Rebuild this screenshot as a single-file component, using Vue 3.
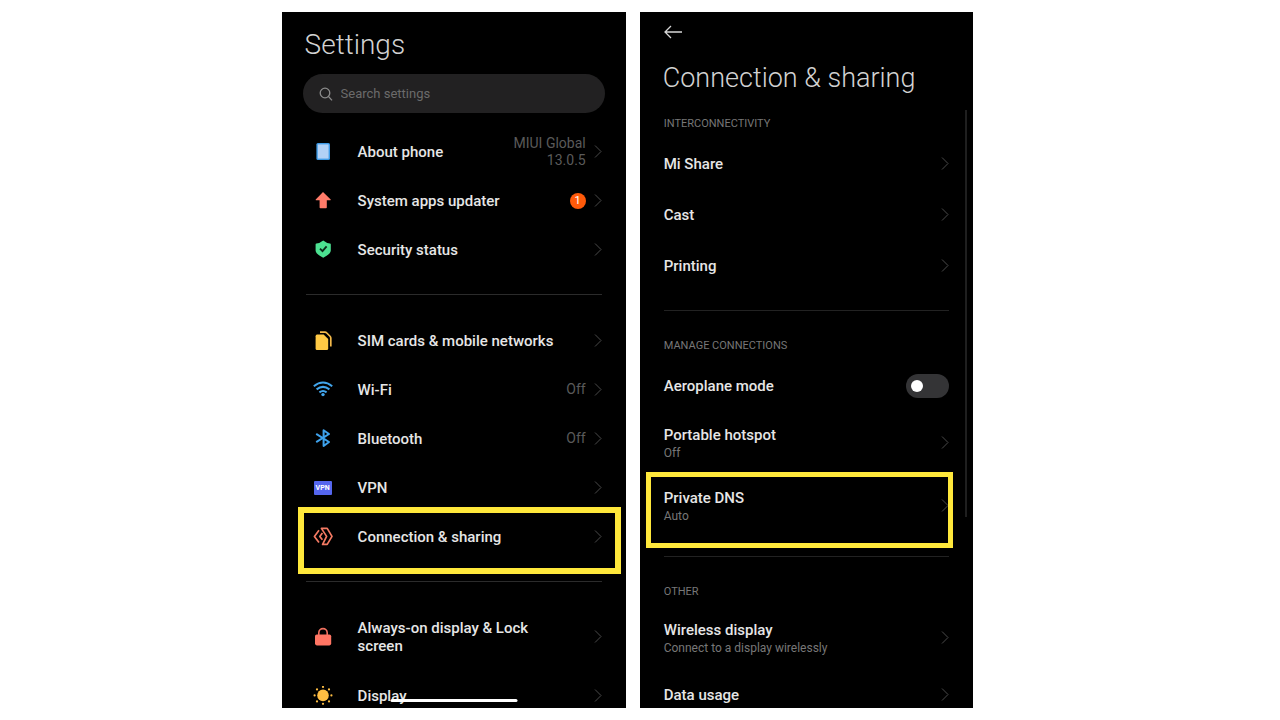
<template>
    <main class="page">
        <section class="phone" aria-label="Settings">
            <h1 class="title">Settings</h1>
            <label class="search">
                <svg class="search__icon" viewBox="0 0 14 14" aria-hidden="true">
                    <circle cx="6" cy="6" r="4.8" />
                    <path d="M9.4 9.4 13 13.4" />
                </svg>
                <input
                    v-model="query"
                    class="search__input"
                    type="text"
                    placeholder="Search settings"
                    aria-label="Search settings"
                />
            </label>

            <div v-for="(group, index) in groups" :key="index" class="group">
                <button
                    v-for="item in group"
                    :key="item.label"
                    type="button"
                    class="row"
                    :class="{ 'row--tall': item.tall }"
                >
                    <span class="row__icon">
                        <svg v-if="item.icon === 'phone'" viewBox="0 0 20 20">
                            <rect x="3.4" y="1" width="13.6" height="17" rx="1.5" fill="#3f9be6" />
                            <rect x="4.8" y="2.4" width="10.8" height="14.2" fill="#b3d1f5" />
                        </svg>
                        <svg v-else-if="item.icon === 'update'" viewBox="0 0 20 20">
                            <path
                                d="M10 1 17.7 8.4Q18 9.2 17.3 9.2H13.8V16.4Q13.8 17.2 13 17.2H7.4Q6.6 17.2 6.6 16.4V9.2H3Q2.4 9.2 2.7 8.4Z"
                                fill="#ff7b69"
                            />
                        </svg>
                        <svg v-else-if="item.icon === 'shield'" viewBox="0 0 20 20">
                            <path
                                d="M10.2.4Q13.5 3 17 3.6Q17.8 3.8 17.8 4.6V10.6Q17.8 14 10.2 17.8Q2.6 14 2.6 10.6V4.6Q2.6 3.8 3.4 3.6Q7 3 10.2.4Z"
                                fill="#4ce191"
                            />
                            <path d="M7 8.6 9.5 11.2 13.6 6.4" fill="none" stroke="#0b2a1a" stroke-width="1.8" />
                        </svg>
                        <svg v-else-if="item.icon === 'sim'" viewBox="0 0 20 20">
                            <path
                                d="M4 3.6H10.6L15.2 8V17.4Q15.2 19 13.6 19H4Q2.6 19 2.6 17.4V5.2Q2.6 3.6 4 3.6Z"
                                fill="#ffc944"
                            />
                            <path
                                d="M7 1.2H12Q13 1.2 13.8 2L16.8 5Q17.8 6 17.8 7V15.6"
                                fill="none"
                                stroke="#f3b94b"
                                stroke-width="1.7"
                            />
                        </svg>
                        <svg v-else-if="item.icon === 'wifi'" viewBox="0 0 20 20">
                            <g fill="none" stroke="#42a5ec" stroke-width="2">
                                <path d="M.8 6.2Q10-1.2 19.2 6.2" />
                                <path d="M3.6 9.4Q10 4.4 16.4 9.4" />
                                <path d="M6.4 12.4Q10 9.6 13.6 12.4" />
                            </g>
                            <circle cx="10" cy="14.6" r="1.7" fill="#42a5ec" />
                        </svg>
                        <svg v-else-if="item.icon === 'bluetooth'" viewBox="0 0 20 20">
                            <path
                                d="M3.2 4.8 16 13 10.6 17V1.2L16 5 3.2 13.2"
                                fill="none"
                                stroke="#3ea2ec"
                                stroke-width="2"
                                stroke-linejoin="round"
                            />
                        </svg>
                        <span v-else-if="item.icon === 'vpn'" class="vpn" aria-hidden="true">VPN</span>
                        <svg v-else-if="item.icon === 'share'" viewBox="0 0 20 20">
                            <g fill="none" stroke="#f47a63" stroke-width="1.7" stroke-linejoin="round">
                                <path d="M8.4 1.4H14.2L19 9.4 14.2 17.4H9.6L13.6 9.4Z" />
                                <path d="M6 3.2 1.4 9.4 6 15.6" />
                                <path d="M9.4 6 6.8 9.4 9.4 12.8" />
                            </g>
                        </svg>
                        <svg v-else-if="item.icon === 'lock'" viewBox="0 0 20 20">
                            <rect x="2" y="7.4" width="16.2" height="11" rx="1.8" fill="#ff7563" />
                            <path
                                d="M5.8 8V5.8A4.2 4.2 0 0 1 14.2 5.8V8"
                                fill="none"
                                stroke="#f0705f"
                                stroke-width="1.6"
                            />
                        </svg>
                        <svg v-else viewBox="0 0 20 20" fill="#ffbe43">
                            <circle cx="10" cy="9.4" r="5.8" />
                            <circle cx="10" cy="1" r="1.1" />
                            <circle cx="10" cy="17.8" r="1.1" />
                            <circle cx="1.6" cy="9.4" r="1.1" />
                            <circle cx="18.4" cy="9.4" r="1.1" />
                            <circle cx="4" cy="3.4" r="1.1" />
                            <circle cx="16" cy="3.4" r="1.1" />
                            <circle cx="4" cy="15.4" r="1.1" />
                            <circle cx="16" cy="15.4" r="1.1" />
                        </svg>
                    </span>
                    <span class="row__label">{{ item.label }}</span>
                    <span v-if="item.value" class="row__value">{{ item.value }}</span>
                    <span v-if="item.badge" class="badge">{{ item.badge }}</span>
                    <svg class="chevron" viewBox="0 0 8 14" aria-hidden="true">
                        <path d="M1 .5 7 6.5 1 12.5" />
                    </svg>
                    <span v-if="item.marked" class="marker"></span>
                </button>
            </div>
            <span class="home-bar"></span>
        </section>

        <section class="phone phone--detail" aria-label="Connection & sharing">
            <button type="button" class="back" aria-label="Back">
                <svg viewBox="0 0 18 14" aria-hidden="true">
                    <path d="M18 7H1M7 1 1 7 7 13" />
                </svg>
            </button>
            <h1 class="title title--detail">Connection &amp; sharing</h1>

            <div v-for="section in sections" :key="section.heading" class="group group--detail">
                <h2 class="heading">{{ section.heading }}</h2>
                <template v-for="item in section.items" :key="item.label">
                    <label v-if="item.toggle" class="row row--detail">
                        <span class="row__label">{{ item.label }}</span>
                        <input v-model="aeroplane" class="switch" type="checkbox" />
                    </label>
                    <button
                        v-else
                        type="button"
                        class="row row--detail"
                        :class="{ 'row--double': item.note }"
                    >
                        <span class="row__label">
                            {{ item.label }}
                            <small v-if="item.note" class="row__note">{{ item.note }}</small>
                        </span>
                        <svg class="chevron" viewBox="0 0 8 14" aria-hidden="true">
                            <path d="M1 .5 7 6.5 1 12.5" />
                        </svg>
                        <span v-if="item.marked" class="marker marker--detail"></span>
                    </button>
                </template>
            </div>
            <span class="scrollbar"></span>
        </section>
    </main>
</template>

<script setup>
import { ref } from "vue";

const query = ref("");
const aeroplane = ref(false);

const groups = [
    [
        { icon: "phone", label: "About phone", value: "MIUI Global 13.0.5" },
        { icon: "update", label: "System apps updater", badge: 1 },
        { icon: "shield", label: "Security status" },
    ],
    [
        { icon: "sim", label: "SIM cards & mobile networks" },
        { icon: "wifi", label: "Wi-Fi", value: "Off" },
        { icon: "bluetooth", label: "Bluetooth", value: "Off" },
        { icon: "vpn", label: "VPN" },
        { icon: "share", label: "Connection & sharing", marked: true },
    ],
    [
        { icon: "lock", label: "Always-on display & Lock screen", tall: true },
        { icon: "sun", label: "Display" },
    ],
];

const sections = [
    {
        heading: "INTERCONNECTIVITY",
        items: [{ label: "Mi Share" }, { label: "Cast" }, { label: "Printing" }],
    },
    {
        heading: "MANAGE CONNECTIONS",
        items: [
            { label: "Aeroplane mode", toggle: true },
            { label: "Portable hotspot", note: "Off" },
            { label: "Private DNS", note: "Auto", marked: true },
        ],
    },
    {
        heading: "OTHER",
        items: [
            { label: "Wireless display", note: "Connect to a display wirelessly" },
            { label: "Data usage" },
        ],
    },
];
</script>

<style>
body {
    margin: 0;
    background: #fff;
}
</style>

<style scoped>
.page {
    box-sizing: border-box;
    height: 100vh;
    padding: 12px 24% 12px 22%;
    display: grid;
    grid-template-columns: 344fr 333fr;
    gap: 14px;
    font-family: Roboto, "Liberation Sans", sans-serif;
    overflow: hidden;
}

.phone {
    position: relative;
    box-sizing: border-box;
    min-width: 0;
    min-height: 0;
    padding: 16px 24px 0;
    background: #000;
    color: #e6e6e6;
    overflow: hidden;
}

.phone--detail {
    padding-top: 12px;
}

.title {
    margin: 0 0 0 -1px;
    font-size: 28px;
    font-weight: 300;
    line-height: 34px;
    color: #d2d2d2;
}

.title--detail {
    margin-top: 21px;
    margin-bottom: 15px;
    font-size: 27px;
}

.search {
    display: flex;
    align-items: center;
    gap: 8px;
    height: 39px;
    margin: 12px -3px 14px;
    padding: 0 16px;
    border-radius: 20px;
    background: #222122;
}

.search__icon {
    flex: none;
    width: 14px;
    height: 14px;
    fill: none;
    stroke: #8c8c8c;
    stroke-width: 1.3;
}

.search__input {
    flex: 1;
    min-width: 0;
    padding: 0;
    border: 0;
    outline: 0;
    background: none;
    font: 400 13px/18px Roboto, "Liberation Sans", sans-serif;
    color: #e6e6e6;
}

.search__input::placeholder {
    color: #6b6b6b;
    opacity: 1;
}

.group + .group {
    margin-top: 20px;
    padding-top: 21px;
    border-top: 1px solid #2b2b2b;
}

.group--detail + .group--detail {
    margin-top: 19px;
    border-top-color: #222;
}

.heading {
    margin: 0;
    font-size: 11px;
    font-weight: 400;
    line-height: 28px;
    color: #777;
}

.row {
    position: relative;
    display: flex;
    align-items: center;
    width: 100%;
    min-height: 49px;
    padding: 0;
    border: 0;
    background: none;
    font-family: inherit;
    font-size: 15px;
    font-weight: 500;
    line-height: 18px;
    text-align: left;
    color: inherit;
    cursor: pointer;
}

.row--tall {
    min-height: 68px;
}

.row--tall .row__label {
    padding-right: 24px;
}

.row--detail {
    min-height: 51px;
}

.row--double {
    min-height: 63px;
}

.row--double .row__label {
    padding-top: 3px;
}

.row__icon {
    flex: none;
    display: flex;
    justify-content: center;
    width: 34px;
    margin-right: 18px;
}

.row__icon svg {
    width: 20px;
    height: 20px;
}

.row__label {
    flex: 1;
}

.row__note {
    display: block;
    font-size: 12px;
    font-weight: 400;
    color: #777;
}

.row__value {
    width: 80px;
    font-size: 14px;
    font-weight: 400;
    line-height: 17px;
    text-align: right;
    color: #5a5a5a;
}

.badge {
    width: 16px;
    height: 16px;
    border-radius: 50%;
    background: #ff5a0a;
    font-size: 11px;
    font-weight: 400;
    line-height: 16px;
    text-align: center;
    color: #fff;
}

.chevron {
    flex: none;
    width: 8px;
    height: 14px;
    margin-left: 8px;
    fill: none;
    stroke: #4a4a4a;
    stroke-width: 1;
}

.vpn {
    width: 18px;
    border-radius: 1px;
    background: #5566ee;
    font-size: 7px;
    font-weight: 700;
    line-height: 14px;
    text-align: center;
    color: #fff;
}

.marker {
    position: absolute;
    inset: -5px -19px -13px -8px;
    border: 6px solid #ffe83b;
    pointer-events: none;
}

.marker--detail {
    inset: -2px -4px -11px -18px;
    border-width: 5px;
}

.back {
    display: flex;
    align-items: center;
    height: 16px;
    padding: 0;
    border: 0;
    background: none;
    cursor: pointer;
}

.back svg {
    width: 18px;
    height: 14px;
    fill: none;
    stroke: #d6d6d6;
    stroke-width: 1.3;
}

.switch {
    appearance: none;
    box-sizing: border-box;
    display: flex;
    align-items: center;
    width: 43px;
    height: 24px;
    margin: 0;
    padding: 0 5px;
    border-radius: 12px;
    background: #343436;
    cursor: pointer;
}

.switch::before {
    content: "";
    width: 12px;
    height: 12px;
    border-radius: 50%;
    background: #fff;
}

.switch:checked {
    justify-content: flex-end;
    background: #2f80ed;
}

.home-bar {
    position: absolute;
    left: 50%;
    bottom: 6px;
    width: 127px;
    height: 3px;
    border-radius: 2px;
    background: #fff;
    transform: translateX(-50%);
}

.scrollbar {
    position: absolute;
    top: 98px;
    right: 6px;
    width: 2px;
    height: 407px;
    background: #1f1f1f;
}

@media (max-width: 900px) {
    .page {
        padding-left: 12px;
        padding-right: 12px;
    }
}
</style>
